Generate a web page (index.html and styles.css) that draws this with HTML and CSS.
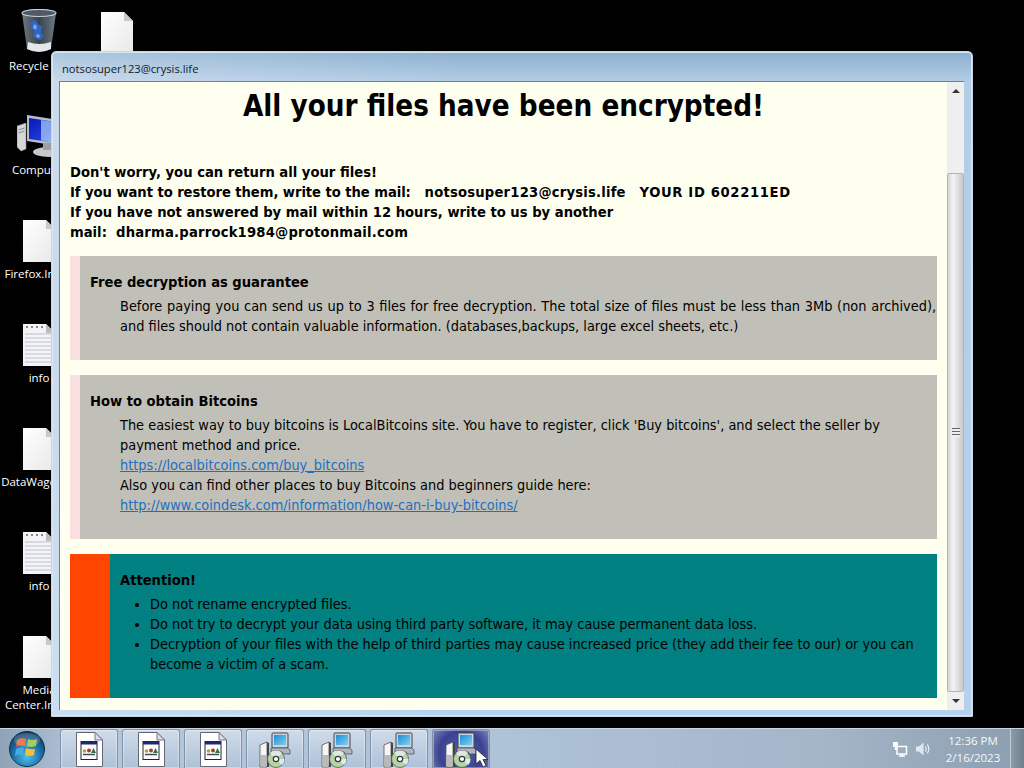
FILE: index.html
```html
<!DOCTYPE html>
<html lang="en">
<head>
<meta charset="utf-8">
<title>notsosuper123@crysis.life</title>
<link rel="stylesheet" href="styles.css">
</head>
<body>
<svg class="defs" width="0" height="0" aria-hidden="true">
  <defs>
    <linearGradient id="paper" x1="0" y1="0" x2="1" y2="1"><stop offset="0" stop-color="#fff"/><stop offset="1" stop-color="#e8e8e8"/></linearGradient>
    <radialGradient id="orb" cx=".5" cy=".72" r=".75"><stop offset="0" stop-color="#4fc0e8"/><stop offset=".55" stop-color="#1c6ea8"/><stop offset="1" stop-color="#0b2e52"/></radialGradient>
    <linearGradient id="screen" x1="0" y1="0" x2="1" y2="1"><stop offset="0" stop-color="#0a16b8"/><stop offset=".55" stop-color="#1c3ad8"/><stop offset="1" stop-color="#8fa8ec"/></linearGradient>
    <linearGradient id="binbody" x1="0" y1="0" x2="1" y2="0"><stop offset="0" stop-color="#6e7880"/><stop offset=".5" stop-color="#38424c"/><stop offset="1" stop-color="#707a84"/></linearGradient>
    <linearGradient id="glass" x1="0" y1="0" x2="1" y2="1"><stop offset="0" stop-color="#1d8fd8"/><stop offset="1" stop-color="#7fd0f0"/></linearGradient>
    <symbol id="file" viewBox="0 0 32 42">
      <path d="M0 0H23L32 9V42H0Z" fill="url(#paper)"/><path d="M23 0L32 9H23Z" fill="#c8c8c8"/>
    </symbol>
    <symbol id="notes" viewBox="0 0 32 42">
      <path d="M0 0H23L32 9V42H0Z" fill="#f4f4f6"/><path d="M23 0L32 9H23Z" fill="#bbb"/>
      <path d="M2 10H30M2 14H30M2 18H30M2 22H30M2 26H30M2 30H30M2 34H30M2 38H30" stroke="#b9c0d4" stroke-width="1"/>
      <path d="M3 3h2M8 3h2M13 3h2M18 3h2" stroke="#888" stroke-width="2"/>
    </symbol>
    <symbol id="app" viewBox="0 0 27 35">
      <path d="M.5.5H19L26.500 8V34.500H.5Z" fill="#fff" stroke="#667"/><path d="M19 .5L26.500 8H19Z" fill="#dde" stroke="#778"/>
      <rect x="5" y="9.500" width="16" height="18" fill="#fff" stroke="#223"/><rect x="5" y="9.500" width="16" height="3" fill="#26266e"/>
      <circle cx="8.500" cy="19" r="1.800" fill="#b8a030"/><circle cx="13" cy="18.500" r="2" fill="#a83a3a"/><path d="M15 21l2.500-5 2.500 5Z" fill="#2a7a3a"/>
      <path d="M7 22.500H19" stroke="#446" stroke-width="1.500"/>
    </symbol>
    <symbol id="setup" viewBox="0 0 32 36">
      <path d="M1 13l7-3v25H1Z" fill="#f6f6f6" stroke="#555" stroke-width=".8"/><path d="M2 23h5v11H2Z" fill="#999" opacity=".65"/>
      <path d="M8 10l2 1v24H8Z" fill="#444"/>
      <rect x="13" y="1" width="16" height="15" rx="1" fill="#ccd4de" stroke="#445"/><rect x="15" y="3" width="12" height="10" fill="url(#glass)"/>
      <path d="M12 16h17l2 2v4h-6l-2-2H12Z" fill="#aeb6c0" stroke="#445" stroke-width=".7"/>
      <circle cx="17" cy="27" r="8.500" fill="#b4d4a0" stroke="#556" stroke-width=".8"/><path d="M17 27L11 21A8.500 8.500 0 0 1 23 21Z" fill="#dfe8e0"/><path d="M17 27L23 33A8.500 8.500 0 0 0 25.500 27Z" fill="#e0e8f8"/><circle cx="17" cy="27" r="2.700" fill="#fff" stroke="#334" stroke-width="1.200"/>
    </symbol>
  </defs>
</svg>

<main class="desktop">
  <ul class="icons">
    <li class="icon">
      <svg class="glyph bin" viewBox="0 0 36 44"><path d="M1 4L35 4L30 40Q18 46 6 40Z" fill="url(#binbody)"/><path d="M9 14l5-3 4 5 3 1-1 7 3 3-4 4-7-3 1-6-3-3Z" fill="#2f66c4"/><path d="M13 15l3 2-1 4-3-2ZM16 25l3 1-1 3-3-1Z" fill="#7fa8e8"/><path d="M7 33Q18 37 30 33L30 40Q18 46 6 40Z" fill="#e4e6e8"/><ellipse cx="18" cy="4" rx="17" ry="3.500" fill="#505a62" stroke="#c8d0d6" stroke-width="1.200"/></svg>
      <span>Recycle Bin</span>
    </li>
    <li class="icon">
      <svg class="glyph pc" viewBox="0 0 48 42"><path d="M0 11L9 8V34L4 36L0 32Z" fill="#d4d6d8" stroke="#8a8e92" stroke-width=".6"/><path d="M1.500 15l6-2M1.500 18l6-2" stroke="#8a8e92"/><path d="M10 0L48 6V32L10 26Z" fill="#b8bec8"/><path d="M12 3L46 8V29L12 24Z" fill="url(#screen)"/><path d="M24 5L36 6.800V27.500L24 25.500Z" fill="#a8c8f6" opacity=".75"/><ellipse cx="32" cy="37" rx="16" ry="5" fill="#c4c8cc"/><path d="M26 28h12v7H26Z" fill="#9ca0a4"/></svg>
      <span>Computer</span>
    </li>
    <li class="icon"><svg class="glyph doc"><use href="#file"/></svg><span>Firefox.Instal</span></li>
    <li class="icon"><svg class="glyph doc"><use href="#notes"/></svg><span>info</span></li>
    <li class="icon"><svg class="glyph doc"><use href="#file"/></svg><span>DataWagon.In</span></li>
    <li class="icon"><svg class="glyph doc"><use href="#notes"/></svg><span>info</span></li>
    <li class="icon"><svg class="glyph doc"><use href="#file"/></svg><span>Media<br>Center.Instal</span></li>
    <li class="icon"><svg class="glyph doc"><use href="#file"/></svg></li>
  </ul>

  <section class="window">
    <header class="titlebar">notsosuper123@crysis.life</header>
    <div class="client">
      <div class="page">
        <h1 class="headline">All your files have been encrypted!</h1>
        <p class="lead">Don't worry, you can return all your files!<br>
        <span class="tight">If you want to restore them, write to the mail:</span>&nbsp;&nbsp; <span class="addr">notsosuper123@crysis.life</span> &nbsp; <span class="uid">YOUR ID 602211ED</span><br>
        If you have not answered by mail within 12 hours, write to us by another<br>
        mail:&nbsp; <span class="addr">dharma.parrock1984@protonmail.com</span></p>
        <div class="note">
          <h2>Free decryption as guarantee</h2>
          <p><span class="spread">Before paying you can send us up to 3 files for free decryption. The total size of files must be less than 3Mb (non archived),</span> and files should not contain valuable information. (databases,backups, large excel sheets, etc.)</p>
        </div>
        <div class="note">
          <h2>How to obtain Bitcoins</h2>
          <p>The easiest way to buy bitcoins is LocalBitcoins site. You have to register, click 'Buy bitcoins', and select the seller by payment method and price.<br>
          <a href="#">https://localbitcoins.com/buy_bitcoins</a><br>
          Also you can find other places to buy Bitcoins and beginners guide here:<br>
          <a href="#">http://www.coindesk.com/information/how-can-i-buy-bitcoins/</a></p>
        </div>
        <div class="note attention">
          <h2>Attention!</h2>
          <ul>
            <li>Do not rename encrypted files.</li>
            <li>Do not try to decrypt your data using third party software, it may cause permanent data loss.</li>
            <li>Decryption of your files with the help of third parties may cause increased price (they add their fee to our) or you can become a victim of a scam.</li>
          </ul>
        </div>
      </div>
      <div class="scrollbar">
        <span class="arrow up"></span>
        <div class="thumb"><span class="grip"></span></div>
        <span class="arrow down"></span>
      </div>
    </div>
  </section>
</main>

<footer class="taskbar">
  <svg class="orb" viewBox="0 0 36 36">
    <circle cx="18" cy="18" r="17.500" fill="url(#orb)" stroke="#16324e"/>
    <path d="M8 9Q12 6 17 8L16 15Q12 13 7 16Z" fill="#e8602a"/><path d="M19 8Q23 10 28 8L27 15Q22 17 18 15Z" fill="#8cc63f"/>
    <path d="M7 18Q11 15 15 17L14 24Q10 22 6 25Z" fill="#4aa8e8"/><path d="M17 17Q21 19 26 18L25 24Q20 26 16 24Z" fill="#f6c030"/>
    <ellipse cx="18" cy="9" rx="13" ry="7" fill="#fff" opacity=".18"/>
  </svg>
  <div class="tasks">
    <button class="task"><svg class="t-app"><use href="#app"/></svg></button>
    <button class="task"><svg class="t-app"><use href="#app"/></svg></button>
    <button class="task"><svg class="t-app"><use href="#app"/></svg></button>
    <button class="task"><svg class="t-setup"><use href="#setup"/></svg></button>
    <button class="task"><svg class="t-setup"><use href="#setup"/></svg></button>
    <button class="task"><svg class="t-setup"><use href="#setup"/></svg></button>
    <button class="task active"><svg class="t-setup"><use href="#setup"/></svg>
      <svg class="cursor" viewBox="0 0 14 20"><path d="M1 1V16L5 12.500L8 19L11 17.500L8 11.500H13Z" fill="#fff" stroke="#222" stroke-width=".8"/></svg>
    </button>
  </div>
  <div class="tray">
    <svg class="tray-icon" viewBox="0 0 16 16"><path d="M1 1h5v5H1ZM3.500 6v3" fill="#fff"/><path d="M5 5.500h9.500v7.500H5ZM7 15h6M10 13v2M3.500 6v3" fill="none" stroke="#fff" stroke-width="1.500"/></svg>
    <svg class="tray-icon" viewBox="0 0 16 16"><path d="M1 5.500h3L8.500 1.500v13L4 10.500H1Z" fill="#dfe8f0"/><path d="M10.500 5.500q1.500 2.500 0 5M12.500 3.500q3 4.500 0 9" fill="none" stroke="#fff"/></svg>
    <div class="clock"><span>12:36 PM</span><span>2/16/2023</span></div>
    <div class="show-desktop"></div>
  </div>
</footer>
</body>
</html>
```
FILE: styles.css
```css
* { box-sizing: border-box; }
html, body { height: 100%; margin: 0; }
body { display: flex; flex-direction: column; width: 1024px; height: 768px; overflow: hidden; background: #000; font-family: "DejaVu Sans", sans-serif; }
.defs { position: absolute; }

.desktop { position: relative; height: 728px; flex: none; }
.icons { list-style: none; margin: 0; padding: 0; display: grid; grid-auto-flow: column; grid-template-rows: repeat(7, 104px); grid-template-columns: 78px 78px; }
.icon { display: flex; flex-direction: column; align-items: center; color: #fff; font: 11.500px/15px "Open Sans", sans-serif; text-align: center; padding-top: 12px; }
.icon span { margin-top: 4px; white-space: nowrap; }
.glyph { display: block; flex: none; }
.doc { width: 32px; height: 42px; }
.bin { width: 36px; height: 44px; margin-top: -3px; margin-bottom: 1px; }
.pc { width: 48px; height: 42px; margin-left: 4px; margin-top: -1px; }
.icon:nth-child(2) span { margin-top: 5px; }

.window { position: absolute; left: 51px; top: 51px; width: 922px; height: 666px; display: flex; flex-direction: column; padding: 0 8px 6px 7px; border-radius: 5px 5px 0 0; background: linear-gradient(90deg, rgba(255,255,255,.28), rgba(255,255,255,0) 45%), linear-gradient(#8bb0d0 0, #b4cde6 30px, #b5d1ec 100%); border: 1px solid #c6d6e6; box-shadow: inset 0 0 0 1px #d8e6f2; }
.titlebar { height: 29px; flex: none; display: flex; align-items: flex-end; padding: 0 0 5px 3px; font: 11.200px/14px "Open Sans", sans-serif; color: #10202c; }
.client { flex: 1; min-height: 0; display: flex; border: 1px solid #6f8090; border-width: 1px 0 0 1px; }
.page { flex: 1; min-width: 0; background: #fffff0; padding: 0 10px; color: #000; font: 14.400px/20px "DejaVu Sans Condensed", "DejaVu Sans", sans-serif; overflow: hidden; }
.headline { margin: 4px 0 0; text-align: center; font: bold 29.300px/40px "DejaVu Sans Condensed", "DejaVu Sans", sans-serif; color: #000; }
.lead { margin: 36px 0 0; font: bold 14.650px/20px "DejaVu Sans Condensed", "DejaVu Sans", sans-serif; }
.tight { letter-spacing: -.06px; }
.addr { letter-spacing: .2px; }
.uid { letter-spacing: .65px; }
.spread { word-spacing: .6px; }
.note { margin-top: 15px; padding: 16px 0 24px 10px; background: #c0c0b8; border-left: 10px solid #fae0e0; }
.lead + .note { margin-top: 14px; }
.note h2 { margin: 0 0 4px; font: bold 14.600px/20px "DejaVu Sans Condensed", "DejaVu Sans", sans-serif; }
.note p { margin: 0 0 0 30px; }
.note a { color: #1f6fc0; text-decoration: underline; }
.attention { background: #008080; border-left: 40px solid #ff4500; padding: 16px 10px 24px 10px; }
.attention ul { margin: 0; padding: 0 0 0 30px; }

.scrollbar { width: 17px; flex: none; display: flex; flex-direction: column; align-items: stretch; background: #efefef; }
.arrow { height: 18px; flex: none; display: flex; justify-content: center; align-items: center; }
.arrow::before { content: ""; border: 4px solid transparent; }
.up::before { border-bottom: 4px solid #333; border-top: 0; }
.down::before { border-top: 4px solid #333; border-bottom: 0; }
.thumb { margin-top: 73px; flex: 1; display: flex; align-items: center; justify-content: center; background: linear-gradient(90deg, #d4d4d4, #f4f4f4 35%, #c8c8c8); border: 1px solid #b4b4b4; border-radius: 2px; }
.grip { width: 8px; height: 9px; background: repeating-linear-gradient(#666 0 1px, #eee 1px 3px); }

.taskbar { height: 40px; flex: none; display: flex; align-items: stretch; background: linear-gradient(90deg, #8fa3b6, #b4c6da 8%, #aec2d8 50%, #a4b6c8 80%, #8c9fb0); border-top: 1px solid #c9d6e2; }
.orb { width: 36px; height: 36px; margin: 2px 0 0 9px; flex: none; }
.tasks { display: flex; gap: 4px; margin-left: 15px; }
.task { position: relative; width: 58px; padding: 0; display: flex; justify-content: center; align-items: center; background: linear-gradient(#cfdbe9, #aec2d8); border: 1px solid #7f92a6; border-bottom: 0; border-radius: 3px 3px 0 0; box-shadow: inset 0 0 0 1px rgba(255,255,255,.35); }
.active { background: radial-gradient(circle at 50% 60%, #5560b0, #3a4290 60%, #7a86b8); }
.t-app { width: 27px; height: 35px; margin-top: 1px; }
.t-setup { width: 32px; height: 36px; margin-top: 1px; }
.cursor { position: absolute; left: 42px; top: 18px; width: 14px; height: 20px; }
.tray { margin-left: auto; display: flex; align-items: center; }
.tray-icon { width: 16px; height: 16px; margin: 1px 7px 0 0; flex: none; }
.clock { display: flex; flex-direction: column; align-items: center; width: 68px; margin: 1px 0 0 1px; font: 11.500px/17px "Open Sans", sans-serif; color: #f4f8fc; }
.show-desktop { width: 14px; height: 39px; margin-left: 3px; background: linear-gradient(90deg, #8a9ca8, #6f808c); border-left: 1px solid #c0ccd4; }
```
